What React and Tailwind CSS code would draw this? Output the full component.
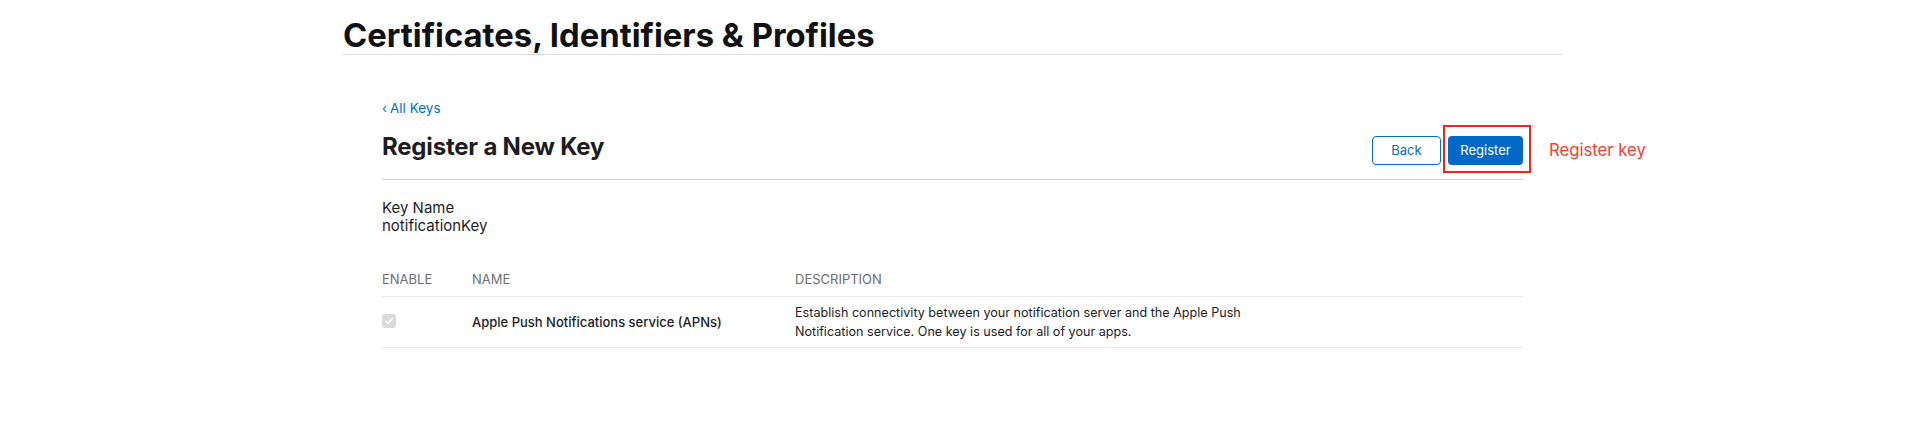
export default function App() {
  return (
    <div className="min-h-[427px] bg-white text-[#1d1d1f]" style={{ fontFamily: "Inter, 'Noto Sans', sans-serif" }}>
      <div className="w-[1222px] mx-auto pt-[16px]">
        <h1 className="mr-[3px] text-[32.8px] leading-[38px] font-bold border-b border-[#dcdcdc] text-[#111]">
          Certificates, Identifiers &amp; Profiles
        </h1>
        <div className="ml-[39px] w-[1141px]">
          <div className="mt-[43px] text-[13.5px] leading-[20px] text-[#0070c9]">
            <a href="#" className="inline-flex items-center gap-[3px]">
              <span className="text-[13px]">‹</span>
              <span>All Keys</span>
            </a>
          </div>
          <div className="mt-[14px] h-[48px] flex justify-between items-start border-b border-[#d2d2d7]">
            <h2 className="text-[24px] leading-[30px] font-bold tracking-[-0.2px] text-[#1d1d1f]">Register a New Key</h2>
            <div className="flex gap-[7px] mt-[4px]">
              <button className="w-[69px] h-[29px] rounded-[4px] border border-[#0070c9] text-[#0070c9] text-[13px] bg-white">
                Back
              </button>
              <div className="relative">
                <button className="w-[75px] h-[29px] rounded-[4px] bg-[#0068c6] text-white text-[13px]">
                  Register
                </button>
                <div className="absolute left-[-5px] right-[-8px] top-[-11px] bottom-[-8px] border-2 border-[#f5221b] pointer-events-none"></div>
                <div className="absolute left-[101px] top-[2px] leading-[24px] text-[16.7px] text-[#ff3b30] whitespace-nowrap">
                  Register key
                </div>
              </div>
            </div>
          </div>
          <div className="mt-[19px] text-[15px] leading-[18px]">
            <div>Key Name</div>
            <div>notificationKey</div>
          </div>
          <div className="mt-[35px]">
            <div className="flex text-[13px] leading-[18px] text-[#6e6e73] pb-[8px] border-b border-[#e8e8ed]">
              <div className="w-[90px]">ENABLE</div>
              <div className="w-[323px]">NAME</div>
              <div>DESCRIPTION</div>
            </div>
            <div className="flex items-center py-[6px] border-b border-[#e8e8ed] text-[12.6px] leading-[19px]">
              <div className="w-[90px] flex items-center">
                <span className="w-[14px] h-[14px] rounded-[3px] bg-[#dadada] flex items-center justify-center mt-[-3px]">
                  <svg width="10" height="10" viewBox="0 0 10 10" fill="none">
                    <path d="M2 5.2 L4.1 7.3 L8.2 2.6" stroke="white" strokeWidth="1.6" strokeLinecap="round" strokeLinejoin="round" />
                  </svg>
                </span>
              </div>
              <div className="w-[323px] text-[13px] font-medium">Apple Push Notifications service (APNs)</div>
              <div className="text-[#1d1d1f]">
                Establish connectivity between your notification server and the Apple Push
                <br />
                Notification service. One key is used for all of your apps.
              </div>
            </div>
          </div>
        </div>
      </div>
    </div>
  );
}
